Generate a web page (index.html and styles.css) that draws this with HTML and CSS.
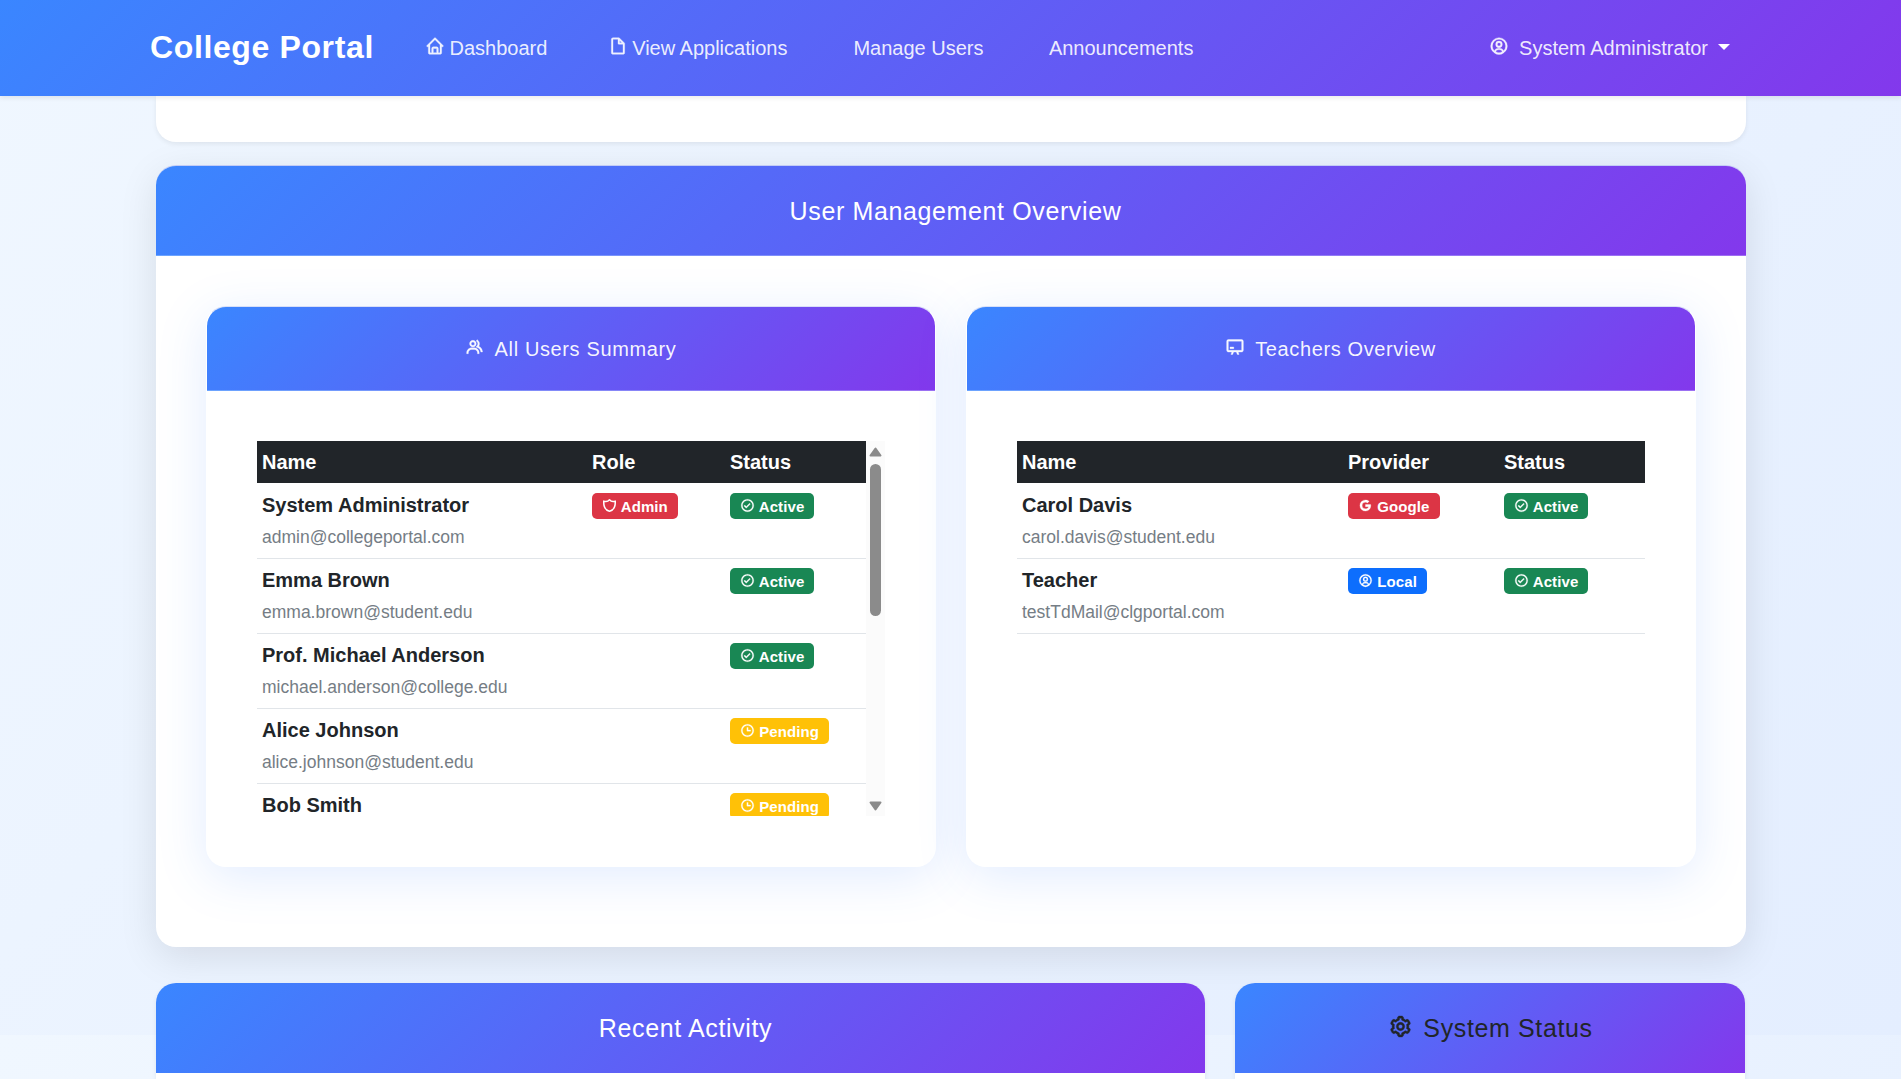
FILE: index.html
```html
<!DOCTYPE html>
<html lang="en">
<head>
<meta charset="utf-8">
<title>College Portal</title>
<link rel="stylesheet" href="styles.css">
</head>
<body>
<svg class="sprite" aria-hidden="true">
  <symbol id="home" viewBox="0 0 24 24"><path d="M3 13h1v7c0 1.103.897 2 2 2h12c1.103 0 2-.897 2-2v-7h1a1 1 0 0 0 .707-1.707l-9-9a.999.999 0 0 0-1.414 0l-9 9A1 1 0 0 0 3 13zm7 7v-5h4v5h-4zm2-15.586 6 6V15l.001 5H16v-5c0-1.103-.897-2-2-2h-4c-1.103 0-2 .897-2 2v5H6v-9.586l6-6z"/></symbol>
  <symbol id="file" viewBox="0 0 24 24"><path d="M19.903 8.586a.997.997 0 0 0-.196-.293l-6-6a.997.997 0 0 0-.293-.196c-.03-.014-.062-.022-.094-.033a.991.991 0 0 0-.259-.051C13.04 2.011 13.021 2 13 2H6c-1.103 0-2 .897-2 2v16c0 1.103.897 2 2 2h12c1.103 0 2-.897 2-2V9c0-.021-.011-.04-.013-.062a.952.952 0 0 0-.051-.259c-.01-.032-.019-.063-.033-.093zM16.586 8H14V5.414L16.586 8zM6 20V4h6v5a1 1 0 0 0 1 1h5l.002 10H6z"/></symbol>
  <symbol id="user" viewBox="0 0 24 24"><path d="M12 2A10.13 10.13 0 0 0 2 12a10 10 0 0 0 4 7.92V20h.1a9.7 9.7 0 0 0 11.8 0h.1v-.08A10 10 0 0 0 22 12 10.13 10.13 0 0 0 12 2zM8.07 18.93A3 3 0 0 1 11 16.57h2a3 3 0 0 1 2.93 2.36 7.75 7.75 0 0 1-7.86 0zm9.54-1.29A5 5 0 0 0 13 14.57h-2a5 5 0 0 0-4.61 3.07A8 8 0 0 1 4 12a8.1 8.1 0 0 1 8-8 8.1 8.1 0 0 1 8 8 8 8 0 0 1-2.39 5.64z"/><path d="M12 6a3.91 3.91 0 0 0-4 4 3.91 3.91 0 0 0 4 4 3.91 3.91 0 0 0 4-4 3.91 3.91 0 0 0-4-4zm0 6a1.91 1.91 0 0 1-2-2 1.91 1.91 0 0 1 2-2 1.91 1.91 0 0 1 2 2 1.91 1.91 0 0 1-2 2z"/></symbol>
  <symbol id="group" viewBox="0 0 24 24"><path d="M16.604 11.048a5.67 5.67 0 0 0 .751-3.44c-.179-1.784-1.175-3.361-2.803-4.44l-1.105 1.666c1.119.742 1.8 1.799 1.918 2.974a3.693 3.693 0 0 1-1.072 2.986l-1.192 1.192 1.618.475C18.951 13.701 19 17.957 19 18h2c0-1.789-.956-5.285-4.396-6.952z"/><path d="M9.5 12c2.206 0 4-1.794 4-4s-1.794-4-4-4-4 1.794-4 4 1.794 4 4 4zm0-6c1.103 0 2 .897 2 2s-.897 2-2 2-2-.897-2-2 .897-2 2-2zm1.5 7H8c-3.309 0-6 2.691-6 6v1h2v-1c0-2.206 1.794-4 4-4h3c2.206 0 4 1.794 4 4v1h2v-1c0-3.309-2.691-6-6-6z"/></symbol>
  <symbol id="board" viewBox="0 0 24 24"><path d="M20 3H4a2 2 0 0 0-2 2v11a2 2 0 0 0 2 2h4.2l-1.1 3h2.1l1.2-3h3.2l1.2 3h2.1l-1.1-3H20a2 2 0 0 0 2-2V5a2 2 0 0 0-2-2zM4 16V5h16v11H4z"/><path d="M6 12h4.500v2H6z"/></symbol>
  <symbol id="shield" viewBox="0 0 24 24"><path fill="none" stroke="currentColor" stroke-width="2.400" stroke-linejoin="round" d="M12 2.800C10 5.200 6.400 6.400 2.800 5C2.400 13 5.500 19.500 12 21.200C18.500 19.500 21.600 13 21.200 5C17.600 6.400 14 5.200 12 2.800z"/></symbol>
  <symbol id="check" viewBox="0 0 24 24"><path d="M12 2C6.486 2 2 6.486 2 12s4.486 10 10 10 10-4.486 10-10S17.514 2 12 2zm0 18c-4.411 0-8-3.589-8-8s3.589-8 8-8 8 3.589 8 8-3.589 8-8 8z"/><path d="M9.999 13.587 7.7 11.292l-1.412 1.416 3.713 3.705 6.706-6.706-1.414-1.414z"/></symbol>
  <symbol id="time" viewBox="0 0 24 24"><path d="M12 2C6.486 2 2 6.486 2 12s4.486 10 10 10 10-4.486 10-10S17.514 2 12 2zm0 18c-4.411 0-8-3.589-8-8s3.589-8 8-8 8 3.589 8 8-3.589 8-8 8z"/><path d="M13 7h-2v6h6v-2h-4z"/></symbol>
  <symbol id="google" viewBox="0 0 24 24"><path d="M20.283 10.356h-8.327v3.451h4.792c-.446 2.193-2.313 3.453-4.792 3.453a5.27 5.27 0 0 1-5.279-5.28 5.27 5.27 0 0 1 5.279-5.279c1.259 0 2.397.447 3.29 1.178l2.6-2.599c-1.584-1.381-3.615-2.233-5.89-2.233a8.908 8.908 0 0 0-8.934 8.934 8.907 8.907 0 0 0 8.934 8.934c4.467 0 8.529-3.249 8.529-8.934 0-.528-.081-1.097-.202-1.625z"/></symbol>
  <symbol id="cog" viewBox="0 0 24 24"><path d="M12 16c2.206 0 4-1.794 4-4s-1.794-4-4-4-4 1.794-4 4 1.794 4 4 4zm0-6c1.084 0 2 .916 2 2s-.916 2-2 2-2-.916-2-2 .916-2 2-2z"/><path d="m2.845 16.136 1 1.730c.531.917 1.809 1.261 2.730.730l.529-.306A8.100 8.100 0 0 0 9 19.402V20c0 1.103.897 2 2 2h2c1.103 0 2-.897 2-2v-.598a8.132 8.132 0 0 0 1.896-1.111l.529.306c.923.530 2.198.188 2.731-.731l.999-1.729a2.001 2.001 0 0 0-.731-2.732l-.505-.292a7.718 7.718 0 0 0 0-2.224l.505-.292a2.002 2.002 0 0 0 .731-2.732l-.999-1.729c-.531-.920-1.808-1.265-2.731-.732l-.529.306A8.100 8.100 0 0 0 15 4.598V4c0-1.103-.897-2-2-2h-2c-1.103 0-2 .897-2 2v.598a8.132 8.132 0 0 0-1.896 1.111l-.529-.306c-.924-.531-2.200-.187-2.731.732l-.999 1.729a2.001 2.001 0 0 0 .731 2.732l.505.292a7.683 7.683 0 0 0 0 2.223l-.505.292a2.003 2.003 0 0 0-.731 2.733zm3.326-2.758A5.703 5.703 0 0 1 6 12c0-.462.058-.926.170-1.378a.999.999 0 0 0-.470-1.108l-1.123-.650.998-1.729 1.145.662a.997.997 0 0 0 1.188-.142 6.071 6.071 0 0 1 2.384-1.399A1 1 0 0 0 11 5.300V4h2v1.300a1 1 0 0 0 .708.956 6.083 6.083 0 0 1 2.384 1.399.999.999 0 0 0 1.188.142l1.144-.661 1 1.729-1.124.649a1 1 0 0 0-.470 1.108c.112.452.170.916.170 1.378 0 .461-.058.925-.171 1.378a1 1 0 0 0 .471 1.108l1.123.649-.998 1.729-1.145-.661a.996.996 0 0 0-1.188.142 6.071 6.071 0 0 1-2.384 1.399A1 1 0 0 0 13 18.700l.002 1.300H11v-1.300a1 1 0 0 0-.708-.956 6.083 6.083 0 0 1-2.384-1.399.992.992 0 0 0-1.188-.141l-1.144.662-1-1.729 1.124-.651a1 1 0 0 0 .471-1.108z"/></symbol>
</svg>

<header class="navbar">
  <a class="brand">College Portal</a>
  <nav class="links">
    <a><svg class="icon"><use href="#home"/></svg> Dashboard</a>
    <a><svg class="icon"><use href="#file"/></svg> View Applications</a>
    <a class="plain">Manage Users</a>
    <a class="plain">Announcements</a>
  </nav>
  <a class="account"><svg class="icon"><use href="#user"/></svg><span>System Administrator</span><i class="caret"></i></a>
</header>

<main class="page">
  <section class="card tail"></section>

  <section class="card overview">
    <h2 class="card-head offset">User Management Overview</h2>
    <div class="panels">
      <article class="panel">
        <h3 class="panel-head"><svg class="icon"><use href="#group"/></svg><span>All Users Summary</span></h3>
        <div class="panel-body">
          <div class="scroll">
            <table class="users">
              <thead><tr><th>Name</th><th>Role</th><th>Status</th></tr></thead>
              <tbody>
                <tr><td><strong>System Administrator</strong><small>admin@collegeportal.com</small></td><td><span class="badge red"><svg class="icon"><use href="#shield"/></svg> Admin</span></td><td><span class="badge green"><svg class="icon"><use href="#check"/></svg> Active</span></td></tr>
                <tr><td><strong>Emma Brown</strong><small>emma.brown@student.edu</small></td><td></td><td><span class="badge green"><svg class="icon"><use href="#check"/></svg> Active</span></td></tr>
                <tr><td><strong>Prof. Michael Anderson</strong><small>michael.anderson@college.edu</small></td><td></td><td><span class="badge green"><svg class="icon"><use href="#check"/></svg> Active</span></td></tr>
                <tr><td><strong>Alice Johnson</strong><small>alice.johnson@student.edu</small></td><td></td><td><span class="badge yellow"><svg class="icon"><use href="#time"/></svg> Pending</span></td></tr>
                <tr><td><strong>Bob Smith</strong></td><td></td><td><span class="badge yellow"><svg class="icon"><use href="#time"/></svg> Pending</span></td></tr>
              </tbody>
            </table>
            <div class="scrollbar">
              <svg class="arrow" viewBox="0 0 13 10"><path d="M6.500 1.500 11.500 8.500H1.500z"/></svg>
              <i class="thumb"></i>
              <svg class="arrow down" viewBox="0 0 13 10"><path d="M6.500 8.500 1.500 1.500H11.500z"/></svg>
            </div>
          </div>
        </div>
      </article>
      <article class="panel">
        <h3 class="panel-head"><svg class="icon"><use href="#board"/></svg><span>Teachers Overview</span></h3>
        <div class="panel-body">
          <table class="teachers">
            <thead><tr><th>Name</th><th>Provider</th><th>Status</th></tr></thead>
            <tbody>
              <tr><td><strong>Carol Davis</strong><small>carol.davis@student.edu</small></td><td><span class="badge red"><svg class="icon"><use href="#google"/></svg> Google</span></td><td><span class="badge green"><svg class="icon"><use href="#check"/></svg> Active</span></td></tr>
              <tr><td><strong>Teacher</strong><small>testTdMail@clgportal.com</small></td><td><span class="badge blue"><svg class="icon"><use href="#user"/></svg> Local</span></td><td><span class="badge green"><svg class="icon"><use href="#check"/></svg> Active</span></td></tr>
            </tbody>
          </table>
        </div>
      </article>
    </div>
  </section>

  <div class="lower">
    <section class="card"><h2 class="card-head offset">Recent Activity</h2></section>
    <section class="card"><h2 class="card-head dark"><svg class="icon"><use href="#cog"/></svg><span>System Status</span></h2></section>
  </div>
</main>
</body>
</html>
```
FILE: styles.css
```css
* { box-sizing: border-box; }

:root {
  --brand: linear-gradient(135deg, #3a86ff 0%, #8338ec 100%);
}

body {
  margin: 0;
  height: 1079px;
  overflow: hidden;
  font: 20px/1.6 "Liberation Sans", Arial, sans-serif;
  color: #212529;
  background: linear-gradient(135deg, #f0f7ff 0%, #e4eeff 100%) 0 -44px / 100% 1079px;
}

.sprite { display: none; }

.icon {
  display: inline-block;
  width: 1em;
  height: 1em;
  fill: currentColor;
  stroke: currentColor;
  stroke-width: .4;
  vertical-align: -1.4px;
}

.navbar {
  position: relative;
  z-index: 2;
  display: flex;
  align-items: center;
  height: 96px;
  padding: 0 171px 0 150px;
  background: var(--brand);
  box-shadow: 0 2px 5px rgba(0, 0, 0, .08);
  color: #fff;
  white-space: nowrap;
}

.brand {
  width: 275px;
  font-size: 32px;
  font-weight: 700;
  letter-spacing: .625px;
  padding-bottom: 1px;
}

.links {
  display: flex;
  gap: 60.2px;
  color: rgba(255, 255, 255, .9);
}

.links .icon { margin-right: -1px; }
.plain { padding-left: 5.8px; }
.plain:last-child { margin-left: -.6px; }

.account {
  display: flex;
  align-items: center;
  margin-left: auto;
  color: rgba(255, 255, 255, .9);
}

.account .icon { margin: -4px 10px 0 0; }

.caret {
  margin: -2px 0 0 10px;
  border: 6px solid transparent;
  border-top-color: #fff;
  border-bottom: 0;
}

.page { padding: 0 155px 0 156px; }

.card {
  overflow: hidden;
  border-radius: 20px;
  background: #fff;
  box-shadow: 0 2px 5px rgba(0, 0, 0, .07);
}

.tail {
  height: 46px;
  border-radius: 0 0 20px 20px;
}

.overview {
  height: 782px;
  margin-top: 23px;
  border-top: 1px solid #c3ccf6;
  box-shadow: 0 10px 38px rgba(0, 0, 0, .1);
}

.card-head {
  display: flex;
  align-items: center;
  justify-content: center;
  height: 90px;
  margin: 0;
  background: var(--brand);
  color: #fff;
  font-size: 25px;
  font-weight: 400;
  letter-spacing: .625px;
}

.overview .card-head { border-bottom: 1px solid rgba(255, 255, 255, .25); }
.card-head.offset { padding-left: 9px; }
.lower .card-head.offset { padding-left: 10px; }
.card-head.dark { color: #212529; padding-left: 1px; }
.card-head .icon { margin: -3px 10px 0 0; }
.panel-head .icon { margin: -3px 10px 0 -1px; }

.panels {
  display: grid;
  grid-template-columns: 1fr 1fr;
  gap: 30px;
  padding: 50px;
}

.panel {
  height: 561px;
  border: 1px solid #fff;
  border-top-color: #d8dff8;
  border-radius: 20px;
  background: #fff;
  box-shadow: 0 10px 50px rgba(58, 126, 255, .15);
  overflow: hidden;
}

.panel-head {
  display: flex;
  align-items: center;
  justify-content: center;
  height: 84px;
  margin: 0;
  border-bottom: 1px solid rgba(255, 255, 255, .25);
  background: var(--brand);
  color: rgba(255, 255, 255, .95);
  font-size: 20px;
  font-weight: 400;
  letter-spacing: .625px;
}

.panel-body { padding: 50px; }

.scroll {
  display: flex;
  height: 375px;
  overflow: hidden;
}

table {
  border-collapse: separate;
  border-spacing: 0;
  table-layout: fixed;
}

.users { width: 609px; flex: none; align-self: flex-start; }
.teachers { width: 628px; }
.users th:nth-child(1) { width: 330px; }
.users th:nth-child(2) { width: 138px; }
.teachers th:nth-child(1) { width: 326px; }
.teachers th:nth-child(2) { width: 156px; }

th {
  padding: 5px;
  background: #212529;
  color: #fff;
  text-align: left;
}

td {
  height: 75px;
  padding: 5px 5px 4px;
  border-bottom: 1px solid #e1e5e9;
  vertical-align: top;
}

tbody tr:first-child td {
  height: 76px;
  padding-top: 6px;
}

td strong, td small { display: block; }

td small {
  color: #757d85;
  font-size: 17.5px;
  line-height: 33px;
}

.badge {
  display: inline-block;
  padding: 5.25px 10px;
  border-radius: 5px;
  color: #fff;
  font-size: 15px;
  font-weight: 700;
  line-height: 15px;
  letter-spacing: .1px;
  white-space: nowrap;
}

.badge .icon { vertical-align: -.8px; }

.red { background: #dc3545; }
.green { background: #198754; }
.yellow { background: #ffc107; }
.blue { background: #0d6efd; }

.scrollbar {
  display: flex;
  flex-direction: column;
  align-items: center;
  width: 19px;
  padding: 6px 0 5px;
  background: #fbfbfb;
}

.arrow {
  width: 13px;
  height: 10px;
  fill: #8b8b8b;
  stroke: #8b8b8b;
  stroke-width: 2;
  stroke-linejoin: round;
}

.down { margin-top: auto; }

.thumb {
  width: 11px;
  height: 152px;
  margin-top: 7px;
  border-radius: 6px;
  background: #8b8b8b;
}

.lower {
  display: grid;
  grid-template-columns: 1049px 510px;
  gap: 30px;
  margin-top: 36px;
}

.lower .card {
  height: 96px;
  border-radius: 20px 20px 0 0;
}
```
